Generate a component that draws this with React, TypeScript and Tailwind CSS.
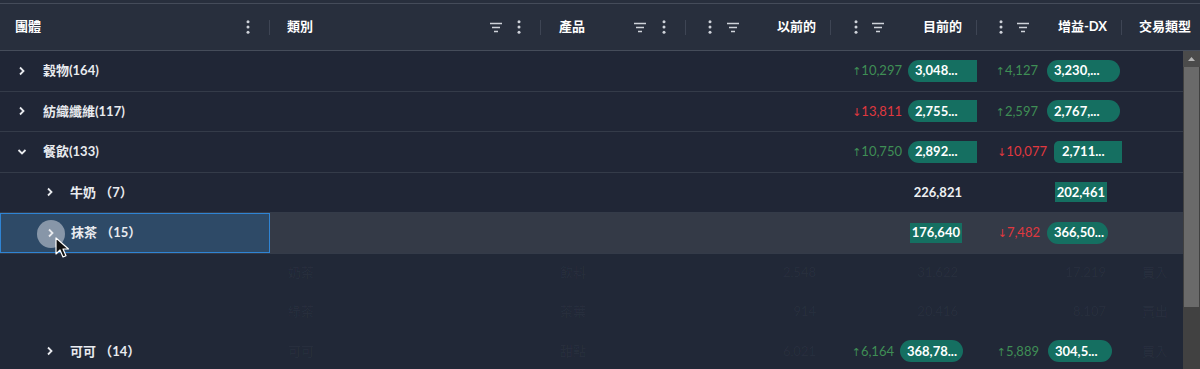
import type { ReactNode } from "react"

type Cell = {
  delta?: string
  up?: boolean
  value: string
  box: string
  gap?: string
  pos: string
}

type Row = {
  label: string
  level: 0 | 1
  open?: boolean
  selected?: boolean
  current?: Cell
  gain?: Cell
}

const PILL = "h-[22px] bg-[#156f61] font-bold text-white"

const rows: Row[] = [
  {
    label: "穀物(164)",
    level: 0,
    current: { delta: "10,297", up: true, value: "3,048...", box: `${PILL} w-[80px] rounded-full pl-[7px]`, gap: "gap-[6px]", pos: "-mr-[11px]" },
    gain: { delta: "4,127", up: true, value: "3,230,...", box: `${PILL} w-[73px] rounded-full pl-[7px]`, gap: "gap-[9px]", pos: "mr-[2px]" },
  },
  {
    label: "紡織纖維(117)",
    level: 0,
    current: { delta: "13,811", up: false, value: "2,755...", box: `${PILL} w-[80px] rounded-full pl-[7px]`, gap: "gap-[6px]", pos: "-mr-[11px]" },
    gain: { delta: "2,597", up: true, value: "2,767,...", box: `${PILL} w-[73px] rounded-full pl-[7px]`, gap: "gap-[9px]", pos: "mr-[2px]" },
  },
  {
    label: "餐飲(133)",
    level: 0,
    open: true,
    current: { delta: "10,750", up: true, value: "2,892...", box: `${PILL} w-[80px] rounded-full pl-[7px]`, gap: "gap-[6px]", pos: "-mr-[11px]" },
    gain: { delta: "10,077", up: false, value: "2,711...", box: `${PILL} w-[76px] rounded-[5px] pl-[8px]`, gap: "gap-[7px]", pos: "-mr-[8px]" },
  },
  {
    label: "牛奶 （7）",
    level: 1,
    current: { value: "226,821", box: "font-bold text-[#eef0f3]", pos: "mr-[15px]" },
    gain: { value: "202,461", box: "h-[20px] bg-[#156f61] px-[2px] font-bold text-white", pos: "mr-[15px]" },
  },
  {
    label: "抹茶 （15）",
    level: 1,
    selected: true,
    current: { value: "176,640", box: "h-[20px] bg-[#156f61] px-[2px] font-bold text-white", pos: "mr-[15px]" },
    gain: { delta: "7,482", up: false, value: "366,50...", box: `${PILL} w-[61px] rounded-full pl-[7px]`, gap: "gap-[7px]", pos: "mr-[14px]" },
  },
]

const ghosts = [
  ["奶茶", "飲料", "2,548", "31,622", "17,219", "買入"],
  ["綠茶", "茶葉", "914", "20,416", "8,107", "賣出"],
  ["可可", "甜點", "6,021", "", "", "買入"],
]

function FilterIcon() {
  return (
    <svg width="16" height="16" viewBox="0 0 16 16" className="shrink-0">
      <path d="M2 4.5h12M4 8.5h8M6 12.5h4" stroke="#cfd3da" strokeWidth="1.6" />
    </svg>
  )
}

function MenuIcon() {
  return (
    <svg width="16" height="16" viewBox="0 0 16 16" className="shrink-0" fill="#cfd3da">
      <circle cx="8" cy="2.8" r="1.5" />
      <circle cx="8" cy="8" r="1.5" />
      <circle cx="8" cy="13.2" r="1.5" />
    </svg>
  )
}

function Sep({ className }: { className: string }) {
  return <span className={`h-[15px] w-px shrink-0 bg-[#3e4554] ${className}`} />
}

function Chevron({ open }: { open?: boolean }) {
  return open ? (
    <svg width="10" height="10" viewBox="0 0 10 10" className="shrink-0">
      <path d="M1.5 3l3.5 3.5L8.5 3" stroke="#e8eaee" strokeWidth="1.8" fill="none" />
    </svg>
  ) : (
    <svg width="10" height="10" viewBox="0 0 10 10" className="shrink-0">
      <path d="M3 1.5l3.5 3.5L3 8.5" stroke="#e8eaee" strokeWidth="1.8" fill="none" />
    </svg>
  )
}

function ValueCell({ cell }: { cell?: Cell }) {
  if (!cell) return <div />
  return (
    <div className="flex items-center justify-end overflow-hidden">
      <div className={`flex shrink-0 items-center ${cell.gap ?? ""} ${cell.pos}`}>
        {cell.delta && (
          <span className={cell.up ? "text-[#3f8e55]" : "text-[#e0383f]"}>
            <span className="font-['DejaVu_Sans'] text-[11px]">{cell.up ? "↑" : "↓"}</span>
            {cell.delta}
          </span>
        )}
        <span className={`flex items-center overflow-hidden whitespace-nowrap ${cell.box}`}>{cell.value}</span>
      </div>
    </div>
  )
}

function GroupCell({ row }: { row: Row }) {
  const pad = row.level === 0 ? "pl-[17px]" : "pl-[45px]"
  const gap = row.level === 0 ? "gap-[16px]" : "gap-[15px]"
  return (
    <div
      className={`relative flex items-center ${pad} ${gap} font-bold text-[#e9ebef] ${
        row.selected ? "border border-[#2f84d4] bg-[#2e4a67]" : ""
      }`}
    >
      {row.selected && <span className="absolute left-[36px] top-[6px] size-[28px] rounded-full bg-[#c3cad3]/60" />}
      <span className="relative">
        <Chevron open={row.open} />
      </span>
      <span className="relative">{row.label}</span>
      {row.selected && (
        <svg width="14" height="22" viewBox="0 0 14 22" className="absolute left-[54px] top-[23px]">
          <path d="M1 1v16l4-4 3 7 3-1.3-3-6.7h5.5z" fill="#111" stroke="#fff" strokeWidth="1.2" strokeLinejoin="round" />
        </svg>
      )}
    </div>
  )
}

const COLS = "grid grid-cols-[270px_271px_145px_145px_146px_145px_61px]"

export default function App() {
  return (
    <div className="h-[369px] w-[1200px] overflow-hidden bg-[#212837] font-[family-name:Lato,'Noto_Sans_CJK_TC',sans-serif] text-[13px]">
      <div className="h-[3px] bg-[#282f3d]" />
      <header className="flex h-[48px] items-center border-y border-[#454c5a] bg-[#282f3d] font-bold text-white">
        <div className="flex h-full w-[270px] items-center pl-[15px]">
          <span className="flex-1">團體</span>
          <MenuIcon />
          <Sep className="ml-[13px]" />
        </div>
        <div className="flex h-full w-[271px] items-center pl-[17px]">
          <span className="flex-1">類別</span>
          <FilterIcon />
          <span className="ml-[7px]"><MenuIcon /></span>
          <Sep className="ml-[13px]" />
        </div>
        <div className="flex h-full w-[145px] items-center pl-[18px]">
          <span className="flex-1">產品</span>
          <FilterIcon />
          <span className="ml-[8px]"><MenuIcon /></span>
          <Sep className="ml-[13px]" />
        </div>
        <div className="flex h-full w-[145px] items-center pl-[16px]">
          <MenuIcon />
          <span className="ml-[7px]"><FilterIcon /></span>
          <span className="flex-1 text-right">以前的</span>
          <Sep className="ml-[14px]" />
        </div>
        <div className="flex h-full w-[146px] items-center pl-[17px]">
          <MenuIcon />
          <span className="ml-[6px]"><FilterIcon /></span>
          <span className="flex-1 text-right">目前的</span>
          <Sep className="ml-[14px]" />
        </div>
        <div className="flex h-full w-[145px] items-center pl-[16px]">
          <MenuIcon />
          <span className="ml-[6px]"><FilterIcon /></span>
          <span className="flex-1 text-right">增益-DX</span>
          <Sep className="ml-[14px]" />
        </div>
        <div className="flex h-full flex-1 items-center pl-[17px] whitespace-nowrap">交易類型</div>
      </header>

      <div className="flex">
        <div className="w-[1183px]">
          {rows.map((row) => (
            <div
              key={row.label}
              className={`${COLS} h-[40.5px] border-b border-[#343b49] ${row.selected ? "bg-[#343a47]" : "bg-[#202636]"}`}
            >
              <GroupCell row={row} />
              <div />
              <div />
              <div />
              <ValueCell cell={row.current} />
              <ValueCell cell={row.gain} />
              <div />
            </div>
          ))}

          {ghosts.slice(0, 2).map((g) => (
            <GhostRow key={g[0]} cells={g} />
          ))}

          <div className={`${COLS} relative h-[39.5px]`}>
            <GhostLayer cells={ghosts[2]} />
            <GroupCell row={{ label: "可可 （14）", level: 1 }} />
            <div />
            <div />
            <div />
            <ValueCell
              cell={{ delta: "6,164", up: true, value: "368,78...", box: `${PILL} w-[63px] rounded-full pl-[7px]`, gap: "gap-[6px]", pos: "mr-[14px]" }}
            />
            <ValueCell
              cell={{ delta: "5,889", up: true, value: "304,5...", box: `${PILL} w-[64px] rounded-full pl-[7px]`, gap: "gap-[9px]", pos: "mr-[10px]" }}
            />
            <div />
          </div>
        </div>

        <div className="flex h-[318px] w-[17px] flex-col bg-[#414141]">
          <div className="flex h-[16px] items-center justify-center bg-[#4b4b4b]">
            <svg width="7" height="4" viewBox="0 0 7 4">
              <path d="M0 4L3.5 0 7 4z" fill="#b5b5b5" />
            </svg>
          </div>
          <div className="mx-[1px] h-[240px] bg-[#6a6a6a]" />
        </div>
      </div>
    </div>
  )
}

function GhostLayer({ cells }: { cells: string[] }): ReactNode {
  return (
    <div className={`${COLS} pointer-events-none absolute inset-0 text-white/[0.04]`}>
      <div />
      <div className="flex items-center pl-[18px]">{cells[0]}</div>
      <div className="flex items-center pl-[19px]">{cells[1]}</div>
      <div className="flex items-center justify-end pr-[15px]">{cells[2]}</div>
      <div className="flex items-center justify-end pr-[19px]">{cells[3]}</div>
      <div className="flex items-center justify-end pr-[16px]">{cells[4]}</div>
      <div className="flex items-center pl-[20px]">{cells[5]}</div>
    </div>
  )
}

function GhostRow({ cells }: { cells: string[] }) {
  return (
    <div className="relative h-[39px]">
      <GhostLayer cells={cells} />
    </div>
  )
}
